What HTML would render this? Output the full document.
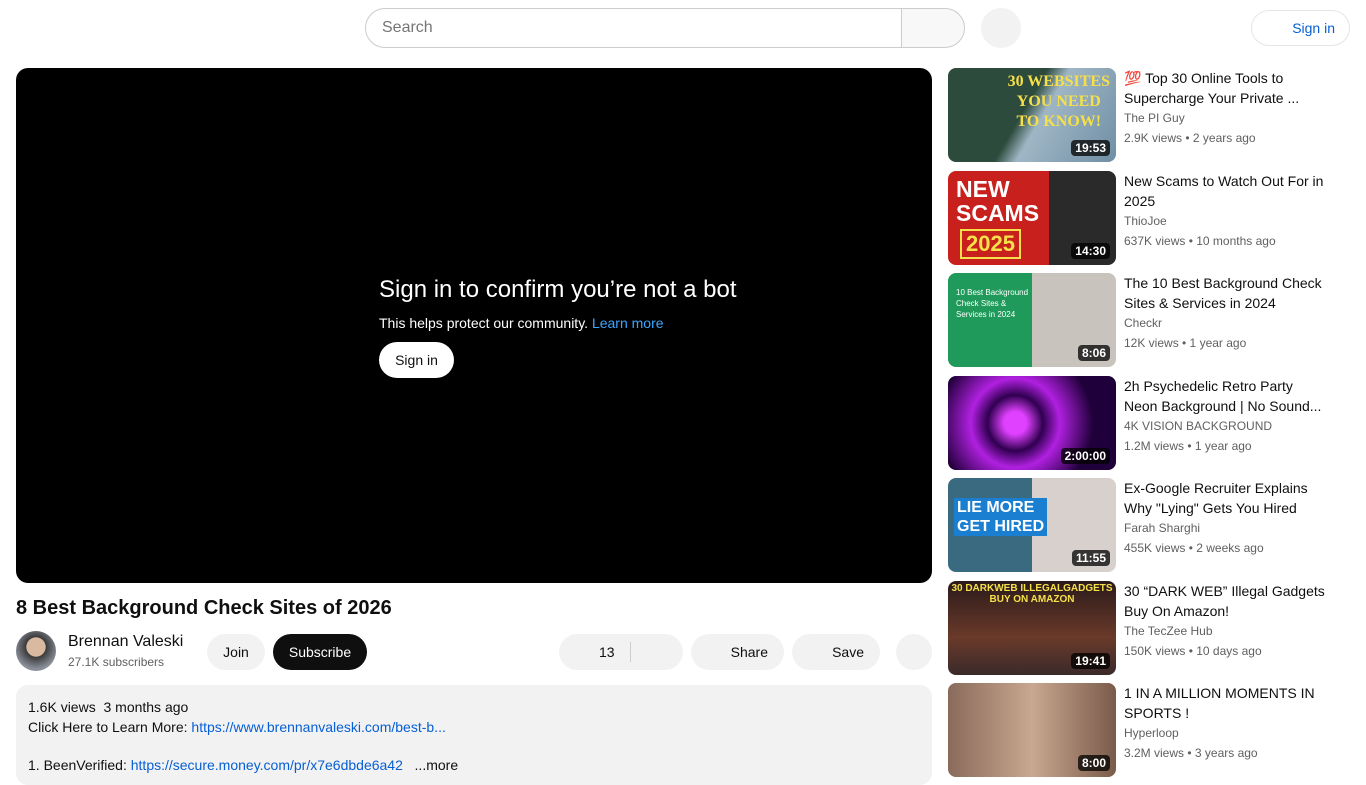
<!DOCTYPE html>
<html><head><meta charset="utf-8"><style>
*{box-sizing:border-box;margin:0;padding:0}
body{width:1366px;height:768px;overflow:hidden;background:#fff;font-family:"Liberation Sans",Arial,sans-serif;color:#0f0f0f;position:relative}
.abs{position:absolute}
.search{left:365px;top:8px;width:537px;height:40px;border:1px solid #ccc;border-radius:20px 0 0 20px;padding-left:16px;font-size:16px;color:#757575;line-height:38px}
.sbtn{left:901px;top:8px;width:64px;height:40px;border:1px solid #ccc;border-radius:0 20px 20px 0;background:#f8f8f8}
.mic{left:981px;top:8px;width:40px;height:40px;border-radius:50%;background:#f2f2f2}
.signin{left:1251px;top:10px;width:99px;height:36px;border:1px solid #e5e5e5;border-radius:18px;color:#065fd4;font-size:14px;line-height:34px;text-align:right;padding-right:14px}
.player{left:16px;top:68px;width:916px;height:515px;background:#000;border-radius:12px}
.pill{background:#f2f2f2;border-radius:18px;height:36px;font-size:14px;line-height:36px;text-align:center}
.th{left:948px;width:168px;height:94px;border-radius:8px;overflow:hidden}
.dur{position:absolute;right:6px;bottom:6px;background:rgba(0,0,0,.75);color:#fff;font-size:12px;font-weight:bold;padding:1px 4px;border-radius:4px}
.info{left:1124px;width:210px}
.t{font-size:14px;line-height:20px;color:#0f0f0f}
.m{font-size:12px;line-height:20px;color:#606060}
</style></head><body>
<div class="abs search">Search</div><div class="abs sbtn"></div><div class="abs mic"></div>
<div class="abs signin">Sign in</div>
<div class="abs player"></div>
<div class="abs" style="left:379px;top:276px;color:#fff;font-size:24px">Sign in to confirm you’re not a bot</div>
<div class="abs" style="left:379px;top:315px;color:#fff;font-size:14px">This helps protect our community. <span style="color:#3ea6ff">Learn more</span></div>
<div class="abs" style="left:379px;top:342px;width:75px;height:36px;background:#fff;border-radius:18px;font-size:14px;line-height:36px;text-align:center">Sign in</div>
<div class="abs" style="left:16px;top:597px;font-size:20px;font-weight:bold">8 Best Background Check Sites of 2026</div>
<div class="abs" style="left:16px;top:631px;width:40px;height:40px;border-radius:50%;background:radial-gradient(circle at 50% 40%,#d9b9a0 0 30%,#3a3a3a 32%,#8a8f9a 70%)"></div>
<div class="abs" style="left:68px;top:633px;font-size:16px">Brennan Valeski</div>
<div class="abs" style="left:68px;top:655px;font-size:12px;color:#606060">27.1K subscribers</div>
<div class="abs pill" style="left:207px;top:634px;width:58px">Join</div>
<div class="abs pill" style="left:273px;top:634px;width:94px;background:#0f0f0f;color:#fff">Subscribe</div>
<div class="abs pill" style="left:559px;top:634px;width:124px;text-align:left;padding-left:40px">13<span style="position:absolute;left:71px;top:8px;width:1px;height:20px;background:#ccc"></span></div>
<div class="abs pill" style="left:691px;top:634px;width:93px;text-align:right;padding-right:16px">Share</div>
<div class="abs pill" style="left:792px;top:634px;width:88px;text-align:right;padding-right:16px">Save</div>
<div class="abs pill" style="left:896px;top:634px;width:36px;border-radius:50%"></div>
<div class="abs" style="left:16px;top:685px;width:916px;height:100px;background:#f2f2f2;border-radius:12px;padding:12px 12px;font-size:14px;line-height:20px">
<div>1.6K views&nbsp; 3 months ago</div>
<div>Click Here to Learn More: <span style="color:#065fd4">https://www.brennanvaleski.com/best-b...</span></div>
<div style="margin-top:18px">1. BeenVerified: <span style="color:#065fd4">https://secure.money.com/pr/x7e6dbde6a42</span> &nbsp; ...more</div>
</div>

<div class="abs th" style="top:68px;background:linear-gradient(120deg,#2d4b3c 0 45%,#9fb6c5 55%,#6f8ea5)"><div style="position:absolute;right:6px;top:4px;color:#f5e04a;font:bold 16px 'Liberation Serif',serif;text-align:center;line-height:20px">30 WEBSITES<br>YOU NEED<br>TO KNOW!</div><span class="dur">19:53</span></div>
<div class="abs info" style="top:68px"><div class="t">💯 Top 30 Online Tools to Supercharge Your Private ...</div><div class="m">The PI Guy</div><div class="m">2.9K views • 2 years ago</div></div>

<div class="abs th" style="top:171px;background:linear-gradient(90deg,#c8201c 0 60%,#2a2a2a 60%)"><div style="position:absolute;left:8px;top:6px;color:#fff;font:bold 23px/24px 'Liberation Sans';">NEW<br>SCAMS</div><div style="position:absolute;left:12px;top:58px;color:#f5e04a;font:bold 22px 'Liberation Sans';border:2px solid #f5e04a;padding:0 4px">2025</div><span class="dur">14:30</span></div>
<div class="abs info" style="top:171px"><div class="t">New Scams to Watch Out For in 2025</div><div class="m">ThioJoe</div><div class="m">637K views • 10 months ago</div></div>

<div class="abs th" style="top:273px;background:linear-gradient(90deg,#1f9a5a 0 50%,#c9c3bd 50%)"><div style="position:absolute;left:8px;top:14px;color:#fff;font-size:8px;line-height:11px">10 Best Background<br>Check Sites &amp;<br>Services in 2024</div><span class="dur">8:06</span></div>
<div class="abs info" style="top:273px"><div class="t">The 10 Best Background Check Sites &amp; Services in 2024</div><div class="m">Checkr</div><div class="m">12K views • 1 year ago</div></div>

<div class="abs th" style="top:376px;background:radial-gradient(circle at 40% 50%,#e040ff 0 10%,#300050 25%,#b020e0 40%,#20003a 70%)"><span class="dur">2:00:00</span></div>
<div class="abs info" style="top:376px;width:200px"><div class="t">2h Psychedelic Retro Party Neon Background | No Sound...</div><div class="m">4K VISION BACKGROUND</div><div class="m">1.2M views • 1 year ago</div></div>

<div class="abs th" style="top:478px;background:linear-gradient(90deg,#3a6a80 0 50%,#d8d0cc 50%)"><div style="position:absolute;left:6px;top:20px;color:#fff;background:#1a7fd0;font:bold 16px/19px 'Liberation Sans';padding:0 3px">LIE MORE<br>GET HIRED</div><span class="dur">11:55</span></div>
<div class="abs info" style="top:478px"><div class="t">Ex-Google Recruiter Explains Why "Lying" Gets You Hired</div><div class="m">Farah Sharghi</div><div class="m">455K views • 2 weeks ago</div></div>

<div class="abs th" style="top:581px;background:linear-gradient(180deg,#2a1a1a,#6a3a2a 60%,#3a2a2a)"><div style="position:absolute;left:0;right:0;top:2px;text-align:center;color:#f5e04a;font:bold 10px 'Liberation Sans'">30 DARKWEB ILLEGALGADGETS<br>BUY ON AMAZON</div><span class="dur">19:41</span></div>
<div class="abs info" style="top:581px"><div class="t">30 “DARK WEB” Illegal Gadgets Buy On Amazon!</div><div class="m">The TecZee Hub</div><div class="m">150K views • 10 days ago</div></div>

<div class="abs th" style="top:683px;background:linear-gradient(90deg,#8a6a5a,#c8a890 50%,#7a5a4a)"><span class="dur">8:00</span></div>
<div class="abs info" style="top:683px"><div class="t">1 IN A MILLION MOMENTS IN SPORTS !</div><div class="m">Hyperloop</div><div class="m">3.2M views • 3 years ago</div></div>
</body></html>
